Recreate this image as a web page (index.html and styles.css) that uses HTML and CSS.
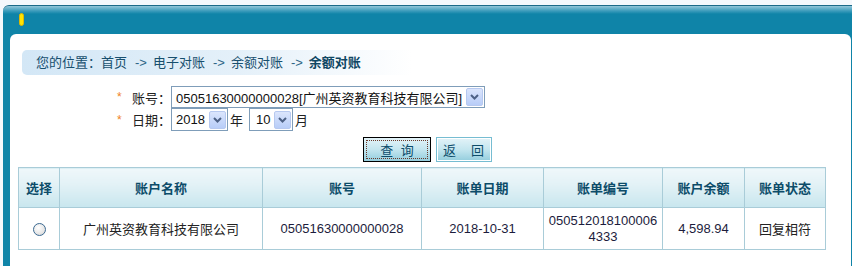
FILE: index.html
```html
<!DOCTYPE html>
<html lang="zh-CN">
<head>
  <meta charset="UTF-8" />
  <title>余额对账</title>
  <link rel="stylesheet" href="styles.css">
</head>
<body>

<div class="frame">
  <div class="frame-head">
    <span class="pill"></span>
  </div>

  <div class="frame-body">
    <div class="crumb">
      您的位置：首页<span class="arrow">-&gt;</span>电子对账<span class="arrow">-&gt;</span>余额对账<span class="arrow">-&gt;</span><b>余额对账</b>
    </div>

    <div class="query-form">
      <div class="form-row">
        <span class="star">*</span>
        <span class="label">账号：</span>
        <div class="select select-account">
          <span class="select-text">05051630000000028[广州英资教育科技有限公司]</span>
          <span class="select-btn"><svg width="9" height="6" viewBox="0 0 9 6"><path d="M1 1l3.5 3.5L8 1" fill="none" stroke="#4d6185" stroke-width="2"/></svg></span>
        </div>
      </div>
      <div class="form-row">
        <span class="star">*</span>
        <span class="label">日期：</span>
        <div class="select select-year">
          <span class="select-text">2018</span>
          <span class="select-btn"><svg width="9" height="6" viewBox="0 0 9 6"><path d="M1 1l3.5 3.5L8 1" fill="none" stroke="#4d6185" stroke-width="2"/></svg></span>
        </div>
        <span class="unit">年</span>
        <div class="select select-month">
          <span class="select-text">10</span>
          <span class="select-btn"><svg width="9" height="6" viewBox="0 0 9 6"><path d="M1 1l3.5 3.5L8 1" fill="none" stroke="#4d6185" stroke-width="2"/></svg></span>
        </div>
        <span class="unit">月</span>
      </div>
    </div>

    <div class="buttons">
      <button class="btn btn-query"><span>查 询</span></button>
      <button class="btn btn-back"><span>返　回</span></button>
    </div>

    <table class="result">
      <tr>
        <th class="c-sel">选择</th>
        <th class="c-name">账户名称</th>
        <th class="c-acct">账号</th>
        <th class="c-date">账单日期</th>
        <th class="c-no">账单编号</th>
        <th class="c-bal">账户余额</th>
        <th class="c-state">账单状态</th>
      </tr>
      <tr>
        <td><input type="radio" name="pick" class="radio"></td>
        <td>广州英资教育科技有限公司</td>
        <td class="num">05051630000000028</td>
        <td class="num">2018-10-31</td>
        <td class="num bill-no">0505120181000064333</td>
        <td class="num">4,598.94</td>
        <td>回复相符</td>
      </tr>
    </table>
  </div>
</div>

</body>
</html>
```

FILE: styles.css
```css
* {
  box-sizing: border-box;
}

body {
  margin: 0;
  background-color: #f4f8fc;
  font-family: 'Liberation Sans', 'Noto Sans CJK SC', sans-serif;
  font-size: 13px;
  color: #222;
  height: 266px;
  overflow: hidden;
}

.frame {
  margin: 5px 0 0 3px;
  height: 261px;
  border-top: 1px solid #1b6a88;
  border-top-left-radius: 6px;
  background: linear-gradient(to bottom, #93c6d9 0, #3a9bbb 5px, #0f84a8 8px, #0f84a8 100%);
  padding: 0 1px 0 7px;
  display: flex;
  flex-direction: column;
}

.frame-head {
  height: 28px;
  padding: 7px 0 0 9px;
}

.pill {
  display: block;
  width: 5px;
  height: 13px;
  border-radius: 3px;
  background-color: #ffe400;
  border: 1px solid #e0b800;
}

.frame-body {
  flex: 1;
  background-color: #fff;
  border-radius: 6px 6px 0 0;
  padding-top: 16px;
}

.crumb {
  margin-left: 12px;
  width: 390px;
  height: 25px;
  line-height: 25px;
  padding-left: 14px;
  border-radius: 5px 0 0 5px;
  background: linear-gradient(to right, #d3e7f6 0, #e4f0f9 55%, #ffffff 100%);
  color: #174f6e;
  white-space: nowrap;
}

.crumb .arrow {
  color: #2c6686;
  margin: 0 6px 0 8px;
}

.crumb b {
  color: #0f4763;
}

.query-form {
  margin-top: 11px;
  padding-left: 107px;
}

.form-row {
  display: flex;
  align-items: center;
  height: 22px;
}

.form-row + .form-row {
  height: 23px;
}

.star {
  width: 15px;
  color: #f0821e;
  font-size: 12px;
}

.label {
  width: 39px;
}

.select {
  display: flex;
  align-items: center;
  height: 100%;
  border: 1px solid #7f9db9;
  background-color: #fff;
  padding: 0 1px 0 4px;
}

.select-text {
  flex: 1;
  white-space: nowrap;
  color: #111;
}

.select-btn {
  width: 17px;
  height: 18px;
  border: 1px solid #b7c9f0;
  border-radius: 2px;
  background: linear-gradient(to bottom, #dbe5fc, #b8cdf8);
  display: flex;
  align-items: center;
  justify-content: center;
}

.select-account {
  width: 314px;
}

.select-year {
  width: 57px;
}

.select-month {
  width: 44px;
  padding-left: 6px;
}

.unit {
  margin: 0 6px 0 2px;
}

.buttons {
  display: flex;
  justify-content: center;
  gap: 5px;
  margin-top: 6px;
  padding-right: 6px;
}

.btn {
  height: 25px;
  font-family: inherit;
  font-size: 13px;
  color: #0d4d6b;
  background: linear-gradient(to bottom, #e3f3f8 0, #c4e6ef 50%, #93cddd 100%);
  padding: 2px;
  cursor: pointer;
}

.btn span {
  display: flex;
  align-items: center;
  justify-content: center;
  height: 100%;
}

.btn-query {
  width: 68px;
  border: 1px solid #000;
  word-spacing: 4px;
}

.btn-query span {
  border: 1px dotted #6b3a2a;
}

.btn-back {
  width: 56px;
  border: 1px solid #76bdd2;
  box-shadow: inset 0 0 0 1px #fff;
  letter-spacing: 1px;
}

.result {
  margin: 5px 0 0 8px;
  width: 807px;
  border-collapse: collapse;
  table-layout: fixed;
}

.result th,
.result td {
  border: 1px solid #a9ccd8;
  text-align: center;
}

.result th {
  height: 40px;
  background: linear-gradient(to bottom, #eff7fa 0, #e3f2f6 40%, #c8e6ee 100%);
  color: #0c4c69;
  font-weight: bold;
}

.result td {
  height: 42px;
  padding: 0 4px;
}

.c-sel { width: 41px; }
.c-name { width: 203px; }
.c-acct { width: 159px; }
.c-date { width: 122px; }
.c-no { width: 119px; }
.c-bal { width: 82px; }
.c-state { width: 81px; }

.num {
  color: #1c1c3c;
}

.bill-no {
  word-break: break-all;
  line-height: 16px;
}

.radio {
  appearance: none;
  width: 13px;
  height: 13px;
  margin: 4px 0 0;
  border: 1px solid #3c6a92;
  border-radius: 50%;
  background: radial-gradient(circle at 40% 35%, #ffffff 0, #e6e6e6 60%, #cfcfcf 100%);
}
```
